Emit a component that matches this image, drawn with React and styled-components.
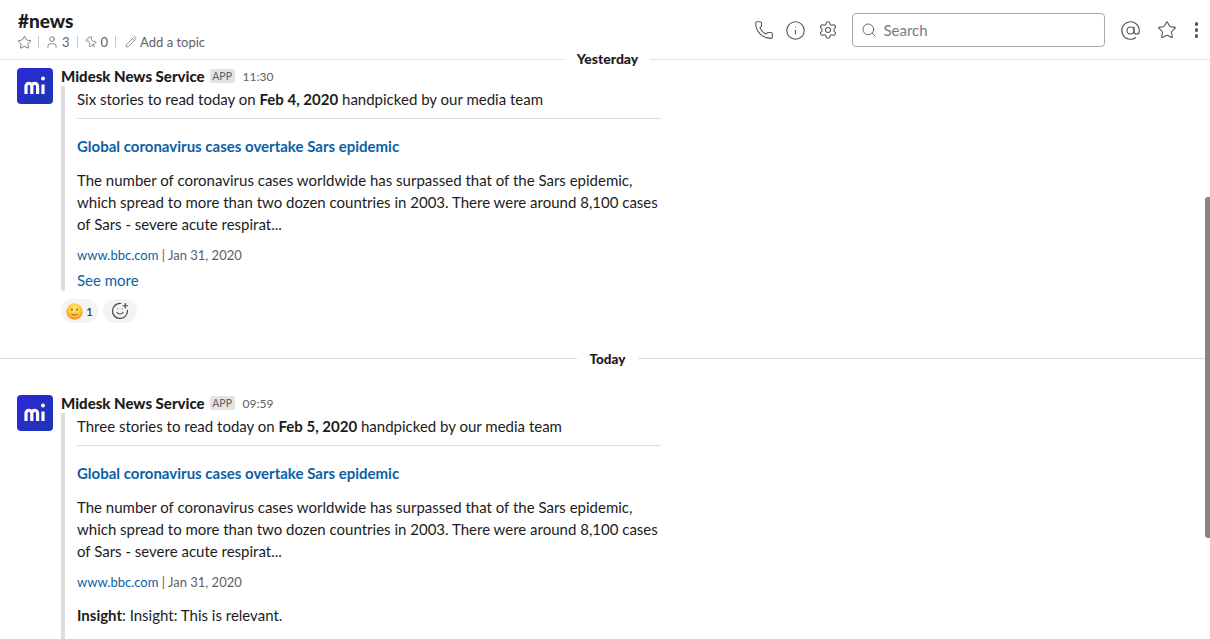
import React from "react";
import styled, { createGlobalStyle } from "styled-components";
import { Phone, Info, Settings, Search, AtSign, Star, User, Pin, Pencil, SmilePlus } from "lucide-react";

const Global = createGlobalStyle`
  html, body { margin: 0; padding: 0; background: #fff; overflow: hidden; }
  body { font-family: Lato, "Open Sans", sans-serif; color: #1d1c1d; }
  * { box-sizing: border-box; }
`;
const Page = styled.div`position: relative; width: 1210px; height: 639px; overflow: hidden; background: #fff;`;
const Header = styled.header`height: 60px; border-bottom: 1px solid #e2e2e2; display: flex; justify-content: space-between; padding: 11px 12px 0 17px;`;
const Channel = styled.div`display: flex; flex-direction: column;`;
const Title = styled.h1`margin: 0 0 0 1px; font-size: 19px; font-weight: 900; line-height: 20px; height: 21px; color: #1d1c1d;`;
const Meta = styled.div`display: flex; align-items: center; height: 18px; margin-top: 1px; font-size: 13px; color: #616061;`;
const MetaItem = styled.span`display: inline-flex; align-items: center; gap: ${p => p.$gap}px;`;
const Sep = styled.span`width: 1px; height: 12px; background: #c9c9c9; margin: 0 ${p => p.$m || 7}px;`;
const Actions = styled.div`display: flex; align-items: center; height: 34px; margin-top: 2px; color: #555;`;
const IconSlot = styled.span`display: inline-flex; width: 32px; justify-content: center; color: #555; margin-left: ${p => p.$ml || 0}px;`;
const SearchBox = styled.div`width: 253px; height: 34px; margin: 0 10px 0 8px; display: flex; align-items: center; gap: 7px; padding-left: 8px; border: 1px solid #a8a8a8; border-radius: 4px; font-size: 15px; color: #7c7a7c;`;
const Dots = styled.span`display: inline-flex; flex-direction: column; gap: 2.5px; margin-left: 12px;`;
const Dot = styled.i`display: block; width: 3.5px; height: 3.5px; border-radius: 50%; background: #555;`;

const Floating = styled.div`position: absolute; top: 50px; left: 565px; width: 85px; height: 18px; background: #fff; font-size: 14px; font-weight: 900; line-height: 18px; text-align: center; color: #1d1c1d;`;
const Feed = styled.main`display: flex; flex-direction: column;`;
const Message = styled.article`display: flex; gap: 8px; padding: ${p => p.$top}px 0 0 17px;`;
const Avatar = styled.div`width: 36px; height: 36px; flex: none; border-radius: 4px; background: linear-gradient(135deg, #2c28d8, #1b35b2);`;
const Body = styled.div`width: 600px; display: flex; flex-direction: column;`;
const Head = styled.div`display: flex; align-items: center; height: 16px;`;
const Sender = styled.span`font-size: 15px; font-weight: 900; color: #1d1c1d;`;
const Badge = styled.span`margin-left: 5px; height: 14px; width: 25px; text-align: center; border-radius: 2px; background: #e3e3e3; font-size: 10.5px; line-height: 14px; color: #616061;`;
const Time = styled.span`margin-left: 8px; font-size: 12px; color: #616061;`;
const Attachment = styled.div`margin-top: 2px; border-left: 4px solid #ddd; border-radius: 2px; padding: 2px 0 0 12px; display: flex; flex-direction: column;`;
const Line = styled.div`font-size: 15px; line-height: 22px; height: 22px; white-space: nowrap; color: #1d1c1d;`;
const Rule = styled.hr`margin: 8px 0 0; border: 0; border-top: 1px solid #ddd; width: 584px;`;
const Link = styled.a`font-size: 15px; line-height: 22px; height: 22px; color: #0b5fa5; font-weight: ${p => p.$bold ? 700 : 400}; margin-top: ${p => p.$top || 0}px;`;
const Para = styled.p`margin: 12px 0 0; font-size: 15px; line-height: 22px; width: 590px; color: #1d1c1d;`;
const Source = styled.div`margin-top: 11px; font-size: 13px; line-height: 18px; color: #616061;`;
const SourceLink = styled.span`color: #0b5fa5;`;
const Insight = styled.div`margin-top: 13px; padding-bottom: 20px; font-size: 15px; line-height: 22px;`;
const Reactions = styled.div`display: flex; gap: 5px; margin-top: 8px;`;
const Reaction = styled.span`display: inline-flex; align-items: center; justify-content: center; gap: 3px; width: ${p => p.$w}px; height: 24px; border-radius: 12px; background: #f4f4f4; font-size: 12px; color: #1d1c1d;`;
const Divider = styled.div`display: flex; align-items: center; height: 18px; margin-top: 26px;`;
const DividerLine = styled.span`flex: ${p => p.$fixed ? "0 0 577px" : 1}; height: 1px; background: #dcdcdc;`;
const DividerText = styled.span`width: 61px; padding-top: 1px; text-align: center; font-size: 13.5px; font-weight: 900; color: #1d1c1d;`;
const Scrollbar = styled.div`position: absolute; top: 197px; right: 0; width: 5px; height: 341px; border-radius: 3px 0 0 3px; background: #858585;`;

const Logo = () => (
  <svg width="36" height="36" viewBox="0 0 36 36" fill="none" stroke="#fff" strokeWidth="3.2">
    <path d="M9 26V18.2a2.9 2.9 0 0 1 5.8 0V26M14.8 18.2a2.9 2.9 0 0 1 5.8 0V26" />
    <path d="M26 16.5V26" />
    <circle cx="26" cy="10.5" r="2" fill="#fff" stroke="none" />
  </svg>
);
const Emoji = () => (
  <svg width="17" height="17" viewBox="0 0 16 16">
    <defs>
      <radialGradient id="face" cx="50%" cy="32%" r="70%">
        <stop offset="0" stopColor="#ffe878" />
        <stop offset="0.6" stopColor="#fdc23a" />
        <stop offset="1" stopColor="#ef8a18" />
      </radialGradient>
    </defs>
    <circle cx="8" cy="8" r="7.8" fill="url(#face)" />
    <ellipse cx="5.6" cy="6.2" rx=".7" ry="1" fill="#6a4510" />
    <ellipse cx="10.4" cy="6.2" rx=".7" ry="1" fill="#6a4510" />
    <path d="M5.2 10.4c1.5 1.1 4.1 1.1 5.6 0" stroke="#8a5a18" strokeWidth=".8" fill="none" />
  </svg>
);

const Story = () => (
  <>
    <Rule />
    <Link $bold $top={16}>Global coronavirus cases overtake Sars epidemic</Link>
    <Para>The number of coronavirus cases worldwide has surpassed that of the Sars epidemic, which spread to more than two dozen countries in 2003. There were around 8,100 cases of Sars - severe acute respirat...</Para>
    <Source><SourceLink>www.bbc.com</SourceLink> | Jan 31, 2020</Source>
  </>
);

export default function App() {
  return (
    <Page>
      <Global />
      <Header>
        <Channel>
          <Title>#news</Title>
          <Meta>
            <Star size={15} strokeWidth={1.3} />
            <Sep $m={6} />
            <MetaItem $gap={3}><User size={14} strokeWidth={1.3} /> 3</MetaItem>
            <Sep />
            <MetaItem $gap={3}><Pin size={13} strokeWidth={1.3} style={{ transform: "rotate(-35deg)" }} /> 0</MetaItem>
            <Sep />
            <MetaItem $gap={3}><Pencil size={12} strokeWidth={1.3} style={{ marginLeft: 2 }} /> Add a topic</MetaItem>
          </Meta>
        </Channel>
        <Actions>
          <IconSlot><Phone size={20} strokeWidth={1.3} /></IconSlot>
          <IconSlot><Info size={21} strokeWidth={1.3} /></IconSlot>
          <IconSlot><Settings size={20} strokeWidth={1.3} /></IconSlot>
          <SearchBox><Search size={16} strokeWidth={1.3} color="#555" /> Search</SearchBox>
          <IconSlot><AtSign size={21} strokeWidth={1.3} /></IconSlot>
          <IconSlot $ml={4}><Star size={20} strokeWidth={1.3} /></IconSlot>
          <Dots><Dot /><Dot /><Dot /></Dots>
        </Actions>
      </Header>
      <Floating>Yesterday</Floating>
      <Feed>
        <Message $top={8}>
          <Avatar><Logo /></Avatar>
          <Body>
            <Head><Sender>Midesk News Service</Sender><Badge>APP</Badge><Time>11:30</Time></Head>
            <Attachment>
              <Line>Six stories to read today on <b>Feb 4, 2020</b> handpicked by our media team</Line>
              <Story />
              <Link $top={5}>See more</Link>
            </Attachment>
            <Reactions>
              <Reaction $w={37}><Emoji /> 1</Reaction>
              <Reaction $w={34}><SmilePlus size={18} strokeWidth={1.6} color="#444" /></Reaction>
            </Reactions>
          </Body>
        </Message>
        <Divider>
          <DividerLine $fixed />
          <DividerText>Today</DividerText>
          <DividerLine />
        </Divider>
        <Message $top={28}>
          <Avatar><Logo /></Avatar>
          <Body>
            <Head><Sender>Midesk News Service</Sender><Badge>APP</Badge><Time>09:59</Time></Head>
            <Attachment>
              <Line>Three stories to read today on <b>Feb 5, 2020</b> handpicked by our media team</Line>
              <Story />
              <Insight><b>Insight</b>: Insight: This is relevant.</Insight>
            </Attachment>
          </Body>
        </Message>
      </Feed>
      <Scrollbar />
    </Page>
  );
}
